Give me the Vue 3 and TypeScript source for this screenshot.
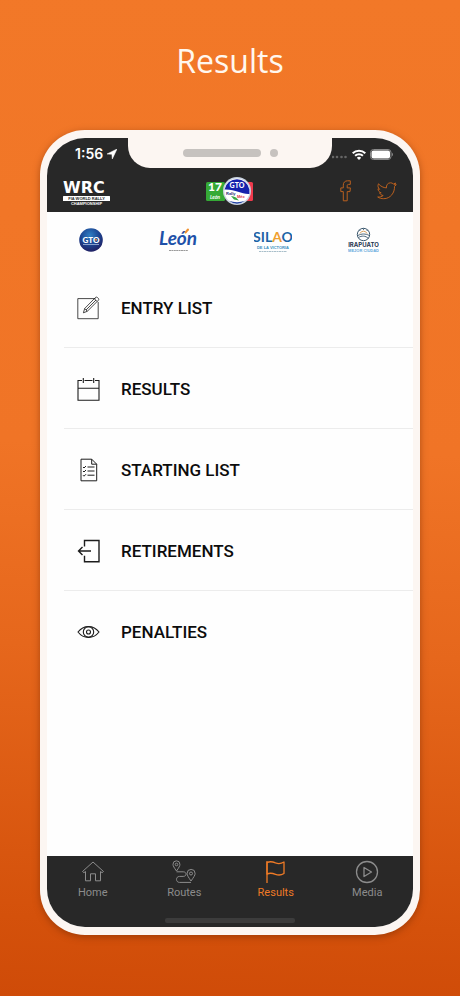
<script setup lang="ts">
import { ref } from 'vue'

interface MenuItem {
  id: string
  label: string
}

const menu: MenuItem[] = [
  { id: 'entry', label: 'ENTRY LIST' },
  { id: 'results', label: 'RESULTS' },
  { id: 'starting', label: 'STARTING LIST' },
  { id: 'retirements', label: 'RETIREMENTS' },
  { id: 'penalties', label: 'PENALTIES' },
]

const tabs: MenuItem[] = [
  { id: 'home', label: 'Home' },
  { id: 'routes', label: 'Routes' },
  { id: 'flag', label: 'Results' },
  { id: 'media', label: 'Media' },
]

const activeTab = ref('flag')
</script>

<template>
  <main class="page">
    <h1 class="title">Results</h1>

    <div class="phone">
      <div class="screen">
        <div class="status">
          <div class="status-left">
            <span class="time">1:56</span>
            <svg class="arrow" width="10" height="10" viewBox="0 0 10 10" aria-hidden="true">
              <path d="M10 0 0 5l4.900.3.4 4.700z" fill="#fff" stroke="#fff" stroke-width=".5" stroke-linejoin="round" />
            </svg>
          </div>
          <div class="notch">
            <span class="speaker"></span>
            <span class="camera"></span>
          </div>
          <div class="status-right">
            <svg width="16" height="4" viewBox="0 0 16 4" class="dots" aria-hidden="true">
              <g fill="#666">
                <circle cx="1" cy="2" r="1.3" /><circle cx="5" cy="2" r="1.3" />
                <circle cx="9.500" cy="2" r="1.3" /><circle cx="13.500" cy="2" r="1.3" />
              </g>
            </svg>
            <svg width="14" height="11" viewBox="0 0 14 11" aria-hidden="true">
              <g fill="none" stroke="#fff" stroke-width="2">
                <path d="M.7 4.200a9 9 0 0 1 12.600 0" />
                <path d="M3.100 6.800a5.600 5.600 0 0 1 7.800 0" />
              </g>
              <path d="M7 10.900 4.800 8.700a3.200 3.200 0 0 1 4.400 0z" fill="#fff" />
            </svg>
            <svg width="24" height="11" viewBox="0 0 24 11" aria-hidden="true">
              <rect x=".5" y=".5" width="20.500" height="10" rx="3" fill="none" stroke="#8a8a8a" />
              <rect x="1.500" y="1.500" width="18.500" height="8" rx="2" fill="#fff" />
              <path d="M22 3.800v3.400c1.300-.4 1.300-3 0-3.400z" fill="#8a8a8a" />
            </svg>
          </div>
        </div>

        <header class="bar">
          <svg width="48" height="30" viewBox="0 0 48 30" role="img" aria-label="WRC">
            <text x="0" y="17" class="wrc" fill="#fff">WRC</text>
            <rect x="0" y="20" width="47" height="5" rx=".5" fill="#fff" />
            <text x="23.500" y="24.200" text-anchor="middle" class="micro" fill="#282828">FIA WORLD RALLY</text>
            <text x="23.500" y="29" text-anchor="middle" class="micro" fill="#fff">CHAMPIONSHIP</text>
          </svg>

          <svg width="48" height="28" viewBox="0 0 48 28" role="img" aria-label="Rally badge">
            <rect x="0" y="5" width="19" height="19" rx="1.500" fill="#35a936" />
            <rect x="34" y="5" width="13" height="19" rx="1.500" fill="#ee3a4c" />
            <text x="2" y="14" class="seventeen" fill="#fff">17</text>
            <text x="4" y="22" class="tiny-italic" fill="#fff">León</text>
            <circle cx="31" cy="14" r="14" fill="#c9d3e0" />
            <circle cx="31" cy="14" r="12.600" fill="#fff" />
            <path d="M18.600 12.500a12.600 12.600 0 0 1 24.800 0v4.500c-8 .5-14-5-24.800-4.500z" fill="#1522ad" />
            <path d="M23 23.800c5 1.800 11 1.800 16 0a12.600 12.600 0 0 1-16 0z" fill="#2444a5" />
            <path d="M25 19c2 0 3 1 5 1.500l3 3-5-1z" fill="#38a745" />
            <text x="31" y="11" text-anchor="middle" class="badge-gto" fill="#fff">GTO</text>
            <text x="20" y="18" class="badge-rally" fill="#1c2b78">Rally</text>
            <text x="31" y="21" class="badge-rally" fill="#d8314b">Méx</text>
          </svg>

          <div class="social">
            <a href="#facebook" aria-label="Facebook">
              <svg width="12" height="22" viewBox="0 0 12 22">
                <path d="M3.300 20.800V11.600H.8V7.900h2.500V5.200C3.300 2.400 4.900.8 7.600.8h2.700v3.600H8.600c-1 0-1.400.5-1.400 1.400v2.100h3.200l-.4 3.700H7.200v9.200z" />
              </svg>
            </a>
            <a href="#twitter" aria-label="Twitter">
              <svg width="20" height="18" viewBox="0 0 20 18">
                <path d="M19.300 2.700 17.500 4.500C17.800 10.600 13.500 16.700 6.700 16.700c-2.200 0-4.300-.6-6-1.700 2.100.2 4-.3 5.500-1.500-1.700-.1-3.100-1.200-3.600-2.700h1.600C2.300 10.300 1 8.700 1 6.800l1.700.5C1 6 .5 3.700 1.500 1.800c2.100 2.500 4.800 3.900 8 4.100C9 3.200 10.800.8 13.500.8c1.200 0 2.100.4 2.900 1.200L18.700 1l-1.300 2z" />
              </svg>
            </a>
          </div>
        </header>

        <section class="sponsors" aria-label="Sponsors">
          <svg width="24" height="28" viewBox="0 0 24 28" role="img" aria-label="GTO">
            <defs>
              <radialGradient id="gto-ball" cx=".45" cy=".3" r=".75">
                <stop offset="0" stop-color="#2f7fc4" />
                <stop offset=".5" stop-color="#1d4794" />
                <stop offset="1" stop-color="#201a5c" />
              </radialGradient>
            </defs>
            <circle cx="12" cy="14" r="11.800" fill="url(#gto-ball)" />
            <text x="12" y="16.500" text-anchor="middle" class="gto" fill="#fff">GTO</text>
            <circle cx="17.200" cy="13.700" r="1" fill="#e9863a" />
            <rect x="4" y="18" width="16" height="1" fill="#b7c9e8" opacity=".7" />
          </svg>

          <svg width="39" height="28" viewBox="0 0 39 28" role="img" aria-label="León">
            <text x="0" y="19" class="leon" fill="#2050a8">León</text>
            <path d="m26.500 6.500 2.500-3" stroke="#f0912f" stroke-width="2" stroke-linecap="round" />
            <path d="M10 24.500h19" stroke="#9a9a9a" stroke-width="1" stroke-dasharray="2 .4" />
          </svg>

          <svg width="38" height="28" viewBox="0 0 38 28" role="img" aria-label="Silao">
            <text x="19" y="16" text-anchor="middle" class="silao" fill="#1c64a6">SIL<tspan fill="#f0a030">A</tspan>O</text>
            <text x="19" y="23" text-anchor="middle" class="micro" fill="#3b8fbf">DE LA VICTORIA</text>
            <path d="M5 25.500h28" stroke="#a9bfca" stroke-width="1" stroke-dasharray="2 .5" />
          </svg>

          <svg width="31" height="28" viewBox="0 0 31 28" role="img" aria-label="Irapuato">
            <g fill="none" stroke="#39566c">
              <circle cx="15.500" cy="8.500" r="6.200" stroke-width="1" />
              <path d="M12 7.500a3.800 3.800 0 0 1 7 0" stroke="#d9a05c" />
              <path d="M15.500 4V2.500M12.400 5l-1.200-1.200M18.600 5l1.200-1.200" stroke-width=".8" />
              <path d="M9.800 9.500c4-2 7.500-2 11.500 0M10.500 11.500c3-2 7-2 10 1" stroke-width=".9" />
            </g>
            <text x="15.500" y="21" text-anchor="middle" class="irapuato" fill="#1e3550">IRAPUATO</text>
            <text x="15.500" y="26" text-anchor="middle" class="micro" fill="#5fa8dc">MEJOR CIUDAD</text>
          </svg>
        </section>

        <nav class="menu" aria-label="Rally information">
          <a v-for="item in menu" :key="item.id" class="row" :href="'#' + item.id">
            <svg class="row-icon" width="24" height="24" viewBox="0 0 24 24" aria-hidden="true">
              <g v-if="item.id === 'entry'" stroke-width=".8">
                <path d="M18.500 2.600H.8v20.100h20.400V6" />
                <path d="m6.400 16.800 1.300-4.300L18.700 1.300c1-.9 3.900 1.500 2.800 2.800L10.300 15.300zM17.300 2.700l2.800 2.800M7.700 12.500l2.600 2.800M9 14 19 4" />
              </g>
              <g v-else-if="item.id === 'results'" stroke-width="1.100">
                <path d="M5 3.500H1v19.800h21V3.500h-4M7.500 3.500h8M1 11.300h21M6.300 1v5M16.700 1v5" />
              </g>
              <g v-else-if="item.id === 'starting'" stroke-width="1">
                <path d="M4 1.200h10.700l5 5V22.800H4zM14.700 1.200v5h5" />
                <path d="M10.500 9h7M10.500 13h7M10.500 17.200h7M6 9l1 1 2-2M6 13l1 1 2-2M6 17.200l1 1 2-2" />
              </g>
              <g v-else-if="item.id === 'retirements'" stroke-width="1.400">
                <path d="M7.500 7.500V1.500H22v21.200H7.500v-6M1.500 12h12.500M5.500 8l-4 4 4 4" />
              </g>
              <g v-else stroke-width="1.100">
                <path d="M1 12c5.500-7.200 15.500-7.200 21 0-5.500 7.200-15.500 7.200-21 0z" />
                <circle cx="11.500" cy="12" r="5.200" />
                <circle cx="11.500" cy="12" r="2" />
              </g>
            </svg>
            <span>{{ item.label }}</span>
          </a>
        </nav>

        <nav class="tabs" aria-label="Main">
          <div class="tab-row">
            <button
              v-for="tab in tabs"
              :key="tab.id"
              type="button"
              class="tab"
              :class="{ active: tab.id === activeTab }"
              @click="activeTab = tab.id"
            >
              <svg width="24" height="24" viewBox="0 0 24 24" aria-hidden="true">
                <path v-if="tab.id === 'home'" d="M1.500 11.500 12 2l10.500 9.500-1.400 1.200-1.600-1.200v9.300h-5v-7h-5v7h-5v-9.300l-1.600 1.200z" />
                <g v-else-if="tab.id === 'routes'">
                  <path d="M4.500 11C2 7.500 1 6 1 4.300a3.400 3.400 0 0 1 6.900 0C7.900 6 7 7.500 4.500 11zM19 21c-2.700-4-3.900-5.700-3.900-7.600a4 4 0 0 1 8 0c0 1.900-1.300 3.600-4.100 7.600z" />
                  <circle cx="4.500" cy="4.500" r="1.300" /><circle cx="19" cy="13.500" r="1.500" />
                  <path d="M4.500 11.800h6.700c3.800 0 3.800 4.600 0 4.600H7.500c-4 0-4 6 0 6H19" />
                </g>
                <g v-else-if="tab.id === 'flag'" stroke-width="1.300">
                  <path d="M3 1v22" />
                  <path d="M3 2.600c3-1.600 5.500-1 8.500.3 3 1.200 5.800.8 8.500-.9v11.500c-2.700 1.700-5.500 2-8.500.8-3-1.200-5.500-1.800-8.500-.2z" />
                </g>
                <g v-else stroke-width="1.300">
                  <circle cx="12" cy="12" r="10.500" />
                  <path d="M9 7.500v9l7.500-4.500z" />
                </g>
              </svg>
              <span>{{ tab.label }}</span>
            </button>
          </div>
          <div class="home-indicator"></div>
        </nav>
      </div>
    </div>
  </main>
</template>

<style>
body {
  margin: 0;
}
</style>

<style scoped>
* {
  box-sizing: border-box;
}
.page {
  min-height: 100vh;
  display: flex;
  flex-direction: column;
  padding: 37px 40px 61px;
  background: linear-gradient(182deg, #f27828 0%, #f07426 45%, #e6671c 65%, #d4510b 92%, #cf4b08 100%);
  font-family: Roboto, "Liberation Sans", sans-serif;
}
.title {
  margin: 0 0 45px;
  text-align: center;
  font: 400 32px/48px "Open Sans", "Noto Sans", sans-serif;
  color: #fff7ef;
}
.phone {
  flex: 1;
  display: flex;
  padding: 8px 7px;
  border-radius: 45px;
  background: #fcf6f2;
  box-shadow: 0 2px 7px rgba(110, 40, 0, 0.5);
}
.screen {
  flex: 1;
  display: flex;
  flex-direction: column;
  overflow: hidden;
  border-radius: 38px;
  background: #fefefe;
}
.status {
  display: grid;
  grid-template-columns: 1fr 204px 1fr;
  height: 30px;
  background: #282828;
}
.status-left,
.status-right {
  display: flex;
  align-items: center;
}
.status-left {
  gap: 4px;
  padding: 2px 0 0 28px;
}
.time {
  font: 600 14px/28px Inter, sans-serif;
  color: #fff;
}
.notch {
  display: flex;
  align-items: center;
  justify-content: flex-end;
  gap: 9px;
  padding-right: 54px;
  border-radius: 0 0 22px 22px;
  background: #fcf6f2;
}
.speaker {
  width: 78px;
  height: 8px;
  border-radius: 4px;
  background: #c6c2bf;
}
.camera {
  width: 8px;
  height: 8px;
  border-radius: 50%;
  background: #c6c2bf;
}
.status-right {
  gap: 4px;
  padding-top: 2px;
}
.dots {
  margin-top: 6px;
}
.bar {
  display: grid;
  grid-template-columns: 1fr auto 1fr;
  align-items: center;
  height: 44px;
  padding: 2px 16px 0;
  background: #282828;
}
.social {
  display: flex;
  justify-content: flex-end;
  align-items: center;
  gap: 25px;
}
.social a {
  display: flex;
}
.social path {
  fill: none;
  stroke: #b9601f;
  stroke-width: 1;
  stroke-linejoin: round;
}
.sponsors {
  display: flex;
  justify-content: space-between;
  align-items: center;
  height: 55px;
  padding: 0 34px 0 32px;
}
.menu {
  flex: 1;
  padding-left: 17px;
}
.row {
  display: flex;
  align-items: center;
  gap: 20px;
  height: 81px;
  padding: 1px 0 0 13px;
  border-bottom: 1px solid #ececec;
  font-size: 17px;
  font-weight: 500;
  line-height: 24px;
  color: #0c0c0c;
  text-decoration: none;
}
.row:last-child {
  border-bottom-color: transparent;
}
.row-icon {
  fill: none;
  stroke: #1c1c1c;
}
.tabs {
  display: flex;
  flex-direction: column;
  align-items: center;
  padding: 4px 0;
  background: #282828;
}
.tab-row {
  align-self: stretch;
  display: grid;
  grid-template-columns: repeat(4, 1fr);
}
.tab {
  display: flex;
  flex-direction: column;
  align-items: center;
  gap: 2px;
  padding: 0;
  border: 0;
  background: none;
  font: 400 11px/14px Roboto, sans-serif;
  color: #8c8c8c;
}
.tab svg {
  fill: none;
  stroke: currentColor;
  stroke-linejoin: round;
}
.tab.active {
  color: #ee7a26;
}
.home-indicator {
  width: 130px;
  height: 5px;
  margin-top: 18px;
  border-radius: 2px;
  background: #3c3c3c;
}
.wrc {
  font: 700 16px "DejaVu Sans", sans-serif;
}
.micro {
  font: 700 4px "Liberation Sans", sans-serif;
}
.seventeen {
  font: 900 12px Lato, sans-serif;
}
.tiny-italic {
  font: italic 700 5px Lato, sans-serif;
}
.badge-gto {
  font: 900 7px Lato, sans-serif;
}
.badge-rally {
  font: 700 4px "Liberation Sans", sans-serif;
}
.gto {
  font: 900 8px Lato, sans-serif;
}
.leon {
  font: italic 700 19px Lato, sans-serif;
}
.silao {
  font: 700 14px Lato, sans-serif;
}
.irapuato {
  font: 700 6px Inter, sans-serif;
}
</style>
